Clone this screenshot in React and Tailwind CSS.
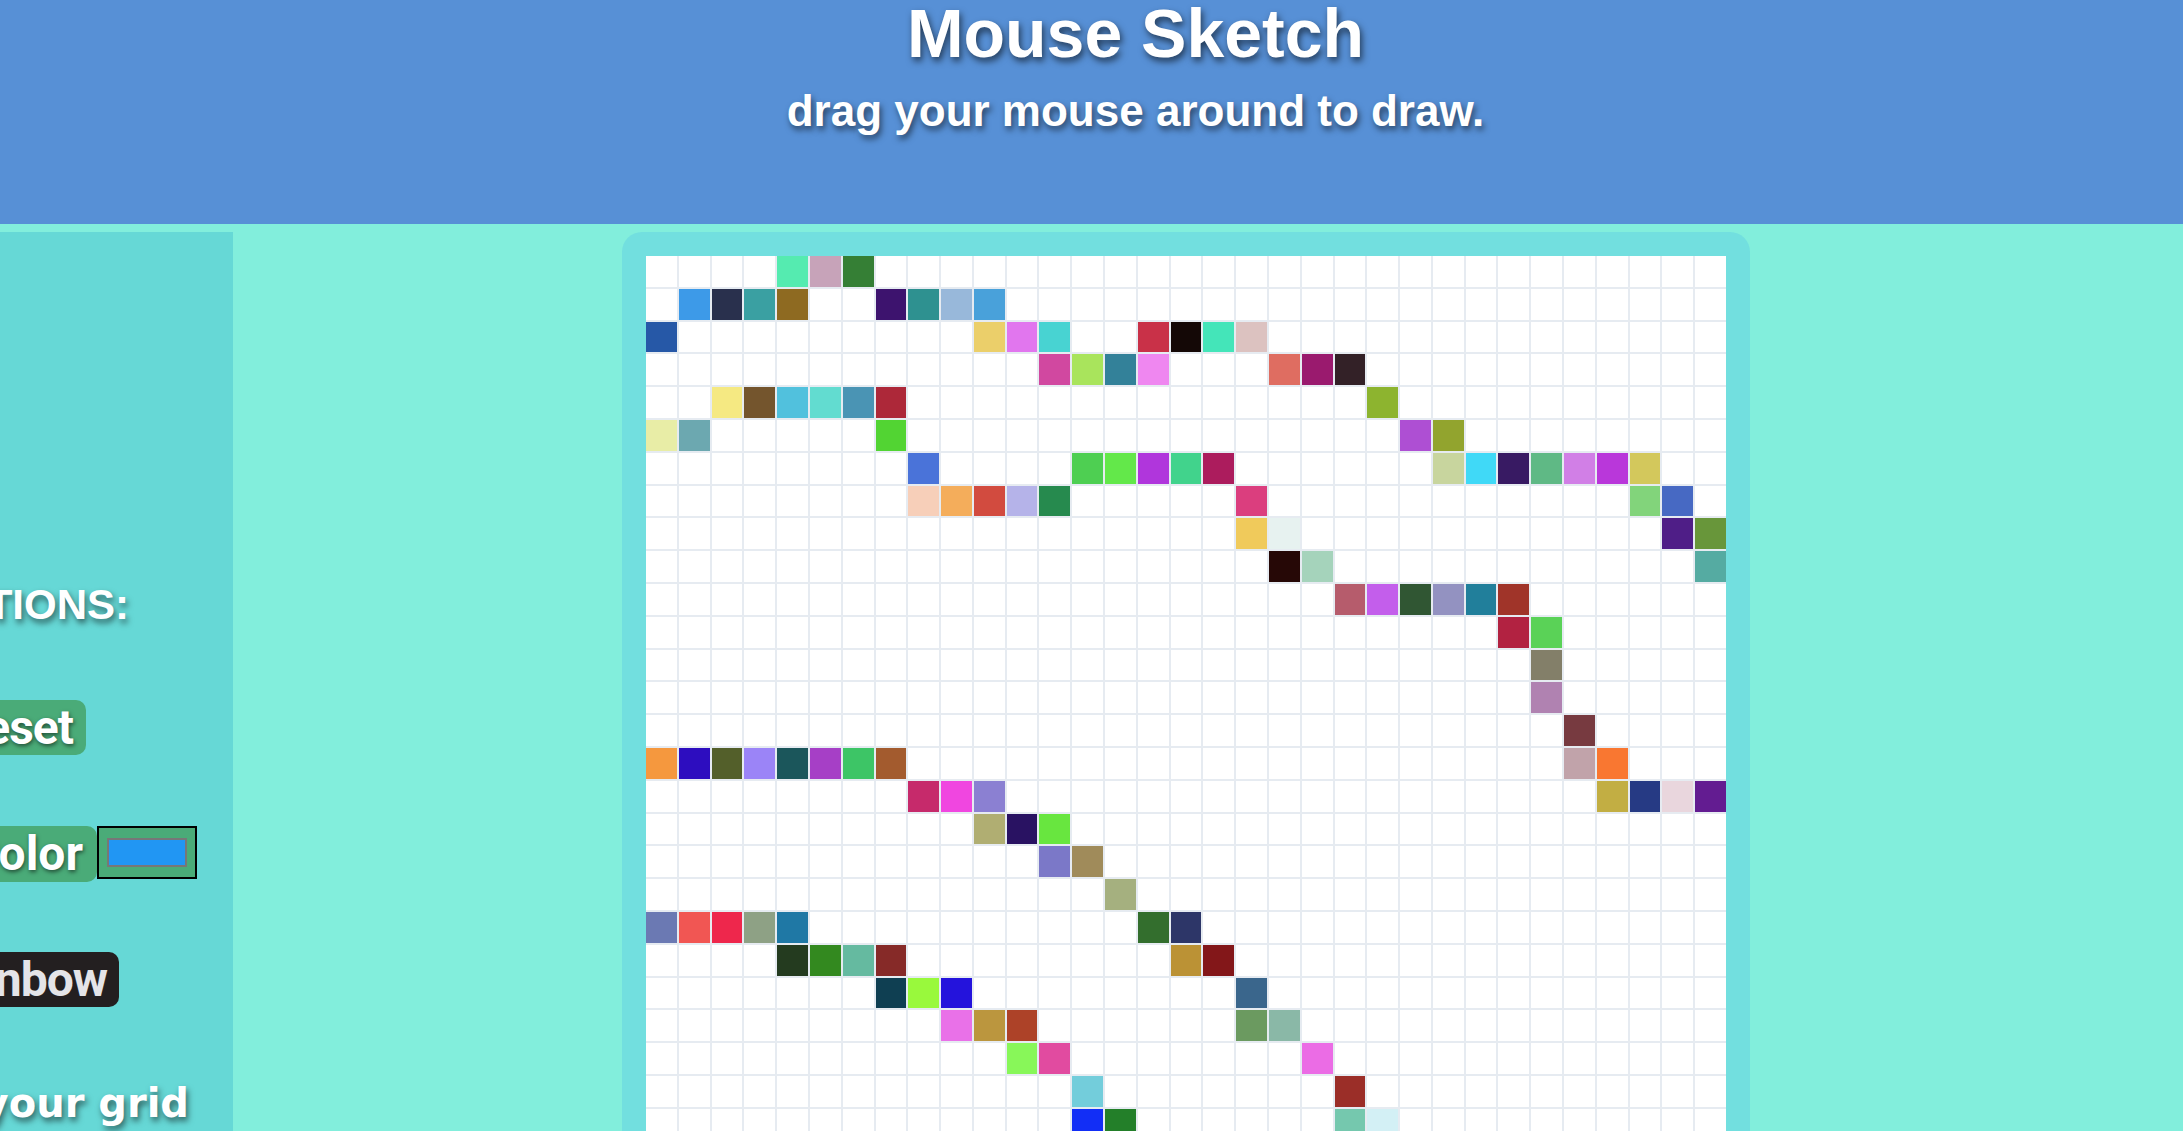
const COLS = 33;
const ROWS = 33;

// cells that were painted while dragging, row -> [col, color]
const strokes = {
    0: [[4, '#55ebb0'], [5, '#c7a3b9'], [6, '#357f35']],
    1: [[1, '#3d9ae8'], [2, '#29304d'], [3, '#3aa0a2'], [4, '#8e6a21'], [7, '#3d136e'], [8, '#2e9190'], [9, '#98b8da'], [10, '#49a1da']],
    2: [[0, '#2658a7'], [10, '#ebcf6a'], [11, '#e176ee'], [12, '#48d3d2'], [15, '#c93148'], [16, '#140806'], [17, '#44e5b9'], [18, '#dcc2c0']],
    3: [[12, '#d148a0'], [13, '#a9e45c'], [14, '#338199'], [15, '#ef87f0'], [19, '#df6d61'], [20, '#9a1a6e'], [21, '#332127']],
    4: [[2, '#f5e982'], [3, '#74552d'], [4, '#51c1dd'], [5, '#62dcd0'], [6, '#4a94b4'], [7, '#ad2839'], [22, '#8db42f']],
    5: [[0, '#e8eda6'], [1, '#6ca8b0'], [7, '#52d433'], [23, '#ae4fd3'], [24, '#92a42e']],
    6: [[8, '#4a73d9'], [13, '#4ecf52'], [14, '#63e84a'], [15, '#b036dc'], [16, '#41d38c'], [17, '#ac1c5d'], [24, '#c8d59e'], [25, '#40d9f7'], [26, '#381a63'], [27, '#5fb985'], [28, '#d17fe6'], [29, '#b937da'], [30, '#d3c85c']],
    7: [[8, '#f7cfb9'], [9, '#f4ad5b'], [10, '#d24b3f'], [11, '#b5b3e9'], [12, '#268a4e'], [18, '#db3e7e'], [30, '#82d47b'], [31, '#4769c3']],
    8: [[18, '#f0ca5b'], [19, '#e7f2f0'], [31, '#4f1e87'], [32, '#68963a']],
    9: [[19, '#260806'], [20, '#a5d3bb'], [32, '#55aba2']],
    10: [[21, '#b65c6c'], [22, '#c35eeb'], [23, '#305633'], [24, '#9392c1'], [25, '#217f9b'], [26, '#a03429']],
    11: [[26, '#b22241'], [27, '#5ad257']],
    12: [[27, '#837f69']],
    13: [[27, '#b082b1']],
    14: [[28, '#773a40']],
    15: [[0, '#f5983e'], [1, '#2d0dbf'], [2, '#535f2a'], [3, '#9b84f7'], [4, '#1b565b'], [5, '#a63fc6'], [6, '#3dc566'], [7, '#a35b2e'], [28, '#c1a3aa'], [29, '#f97731']],
    16: [[8, '#c62a6b'], [9, '#f046e0'], [10, '#8b80d2'], [29, '#c2ae43'], [30, '#263a84'], [31, '#e9d6dd'], [32, '#631c91']],
    17: [[10, '#b0ae72'], [11, '#291262'], [12, '#68e63f']],
    18: [[12, '#7b78c8'], [13, '#a08b5a']],
    19: [[14, '#a5b07f']],
    20: [[0, '#6b79b3'], [1, '#f15653'], [2, '#ee274c'], [3, '#8ea185'], [4, '#1f78a5'], [15, '#336e2d'], [16, '#2d3668']],
    21: [[4, '#243b1f'], [5, '#33891f'], [6, '#65baa0'], [7, '#862a28'], [16, '#bb9235'], [17, '#831719']],
    22: [[7, '#0f3f52'], [8, '#99f93c'], [9, '#2413dc'], [18, '#3a668c']],
    23: [[9, '#e971e8'], [10, '#bb963e'], [11, '#ad4228'], [18, '#6b9a60'], [19, '#8ab8a7']],
    24: [[11, '#88f759'], [12, '#e14ba0'], [20, '#eb6ce5']],
    25: [[13, '#73cddb'], [21, '#9b2e28']],
    26: [[13, '#122ef6'], [14, '#237f29'], [21, '#75c8ae'], [22, '#d3f0f5']],
};

const painted = {};
Object.entries(strokes).forEach(([row, cells]) => {
    cells.forEach(([col, color]) => {
        painted[`${row}-${col}`] = color;
    });
});

const cells = [];
for (let r = 0; r < ROWS; r++) {
    for (let c = 0; c < COLS; c++) {
        cells.push({ key: `${r}-${c}`, color: painted[`${r}-${c}`] || '#ffffff' });
    }
}

const headShadow = "[text-shadow:2px_4px_6px_rgba(0,0,0,0.55)]";
const btnText = "shrink-0 rounded-[10px] text-[48px] leading-none font-['Roboto',sans-serif] font-bold";

const App = () => {
    return (
        <div className="min-h-screen bg-[#82eedc] font-['Liberation_Sans',Arial,sans-serif] overflow-hidden">
            {/* header */}
            <header className="h-[224px] bg-[#5790d6] flex flex-col items-center pl-[88px] text-white font-bold">
                <h1 className="text-[68px] leading-none mt-[-1px] [text-shadow:2px_4px_7px_rgba(0,0,0,0.6)]">Mouse Sketch</h1>
                <p className="text-[44px] leading-none mt-[22px] [text-shadow:2px_4px_6px_rgba(0,0,0,0.55)]">drag your mouse around to draw.</p>
            </header>

            <main className="flex items-start pt-2">
                {/* options */}
                <aside className="w-[233px] h-[1128px] shrink-0 bg-[#66d8d6] overflow-hidden flex flex-col pt-[352px] text-white font-bold">
                    <div className="w-[129px] flex justify-end">
                        <h2 className={`shrink-0 text-[42px] leading-none whitespace-nowrap ${headShadow}`}>INSTRUCTIONS:</h2>
                    </div>

                    <div className="w-[86px] mt-[74px] flex justify-end">
                        <button className={`${btnText} tracking-[-1px] h-[55px] px-[13px] bg-[#4aab78] text-white [text-shadow:1px_2px_4px_rgba(0,0,0,0.55)]`}>
                            Reset
                        </button>
                    </div>

                    <div className="w-[197px] mt-[71px] flex justify-end items-start">
                        <button className={`${btnText} h-[56px] px-[14px] bg-[#4aab78] text-white [text-shadow:1px_2px_4px_rgba(0,0,0,0.55)]`}>
                            Color
                        </button>
                        <div className="shrink-0 w-[100px] h-[53px] border-2 border-black bg-[#4aab78] px-[8px] py-[10px]">
                            <div className="w-full h-full border-2 border-[#777777] bg-[#2196f3]"></div>
                        </div>
                    </div>

                    <div className="w-[119px] mt-[70px] flex justify-end">
                        <button className={`${btnText} tracking-[-1px] h-[55px] px-[12px] bg-[#231f20] text-[#e4e4e8]`}>
                            Rainbow
                        </button>
                    </div>

                    <div className="w-[189px] mt-[76px] flex justify-end">
                        <p className={`shrink-0 whitespace-nowrap text-[40px] leading-none font-['DejaVu_Sans',sans-serif] ${headShadow}`}>Size your grid</p>
                    </div>
                </aside>

                {/* sketch pad */}
                <section className="ml-[389px] w-[1128px] shrink-0 p-6 rounded-[20px] bg-[#72dfdf]">
                    <div className="grid grid-cols-[repeat(33,minmax(0,1fr))] gap-[2px] bg-[#e6ebf1]">
                        {cells.map((cell) => (
                            <div key={cell.key} className="aspect-square" style={{ backgroundColor: cell.color }}></div>
                        ))}
                    </div>
                </section>
            </main>
        </div>
    );
};

export default App;
